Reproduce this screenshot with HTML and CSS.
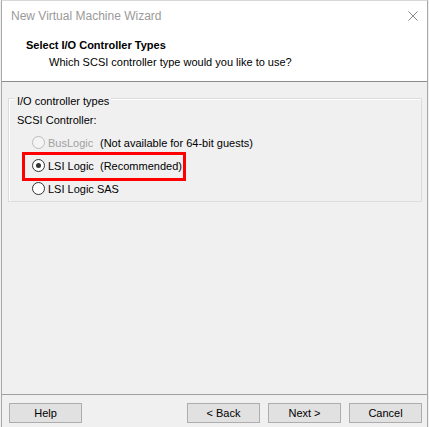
FILE: index.html
```html
<!DOCTYPE html>
<html>
<head>
<meta charset="utf-8">
<link rel="stylesheet" href="styles.css">
</head>
<body>
<div class="window">
  <div class="titlebar">
    <span class="title">New Virtual Machine Wizard</span>
    <svg class="close" width="10" height="10" viewBox="0 0 10 10"><path d="M0.5 0.5 L9.5 9.5 M9.5 0.5 L0.5 9.5" stroke="#8a8a8a" stroke-width="1" fill="none"/></svg>
  </div>
  <div class="header">
    <div class="h-title">Select I/O Controller Types</div>
    <div class="h-sub">Which SCSI controller type would you like to use?</div>
  </div>
  <div class="content">
    <div class="group">
      <div class="legend">I/O controller types</div>
      <div class="scsi">SCSI Controller:</div>
      <div class="row disabled">
        <span class="radio"></span><span class="name">BusLogic</span><span class="note">(Not available for 64-bit guests)</span>
      </div>
      <div class="row highlighted">
        <span class="radio checked"></span><span class="name">LSI Logic</span><span class="note">(Recommended)</span>
      </div>
      <div class="row">
        <span class="radio"></span><span class="name">LSI Logic SAS</span>
      </div>
    </div>
  </div>
  <div class="footer">
    <button class="btn">Help</button>
    <div class="spacer"></div>
    <button class="btn">&lt; Back</button>
    <button class="btn">Next &gt;</button>
    <button class="btn">Cancel</button>
  </div>
</div>
</body>
</html>
```
FILE: styles.css
```css
html, body {
  margin: 0;
  padding: 0;
  background: #f0f0f0;
}
body {
  width: 429px;
  height: 427px;
  overflow: hidden;
  font-family: "Liberation Sans", Arial, sans-serif;
  font-size: 11px;
  color: #000;
}
.window {
  box-sizing: border-box;
  margin-left: 1px;
  width: 427px;
  height: 427px;
  border-left: 1px solid #a8a8a8;
  border-right: 1px solid #a8a8a8;
  border-top: 1px solid #d8d8d8;
  display: flex;
  flex-direction: column;
  background: #f0f0f0;
}
.titlebar {
  height: 29px;
  background: #fff;
  display: flex;
  align-items: center;
  padding-left: 9px;
  padding-right: 9px;
}
.title {
  font-size: 12px;
  color: #9a9a9a;
  flex: 1;
  margin-top: 1px;
}
.close {
  margin-top: 1px;
}
.header {
  background: #fff;
  height: 52px;
  box-sizing: border-box;
  border-bottom: 1px solid #8c8c8c;
  padding-top: 8px;
}
.h-title {
  font-weight: bold;
  padding-left: 24px;
  line-height: 14px;
}
.h-sub {
  padding-left: 47px;
  line-height: 14px;
  margin-top: 3px;
}
.content {
  flex: 1;
  border-bottom: 1px solid #a0a0a0;
  padding: 16px 5px 0 6px;
}
.group {
  position: relative;
  border: 1px solid #dcdcdc;
  box-shadow: inset 1px 1px 0 #fff;
  height: 104px;
  box-sizing: border-box;
  padding: 14px 0 0 8px;
}
.legend {
  position: absolute;
  top: -5px;
  left: 6px;
  padding: 0 2px;
  background: #f0f0f0;
  line-height: 14px;
}
.scsi {
  line-height: 14px;
}
.row {
  display: flex;
  align-items: center;
  height: 23px;
  padding-left: 15px;
  position: relative;
  white-space: nowrap;
}
.scsi + .row {
  margin-top: 4px;
}
.radio {
  flex: none;
  box-sizing: border-box;
  width: 13px;
  height: 13px;
  border-radius: 50%;
  border: 1px solid #333;
  background: #fff;
  position: relative;
  margin-right: 3px;
}
.radio.checked::after {
  content: "";
  position: absolute;
  left: 3px;
  top: 3px;
  width: 5px;
  height: 5px;
  border-radius: 50%;
  background: #333;
}
.name {
  flex: none;
  width: 52px;
}
.disabled .radio {
  border-color: #bcbcbc;
  background: #f4f4f4;
}
.disabled .name {
  color: #a0a0a0;
}
.highlighted::before {
  content: "";
  position: absolute;
  left: 5px;
  top: -2px;
  width: 158px;
  height: 23px;
  border: 3px solid #f00;
}
.footer {
  height: 32px;
  display: flex;
  align-items: flex-start;
  padding: 8px 5px 0 7px;
  gap: 8px;
  box-sizing: border-box;
}
.spacer {
  flex: 1;
}
.btn {
  width: 73px;
  height: 20px;
  box-sizing: border-box;
  border: 1px solid #adadad;
  background: #e1e1e1;
  font-family: "Liberation Sans", Arial, sans-serif;
  font-size: 11px;
  color: #000;
  padding: 0;
  margin: 0;
}
```
